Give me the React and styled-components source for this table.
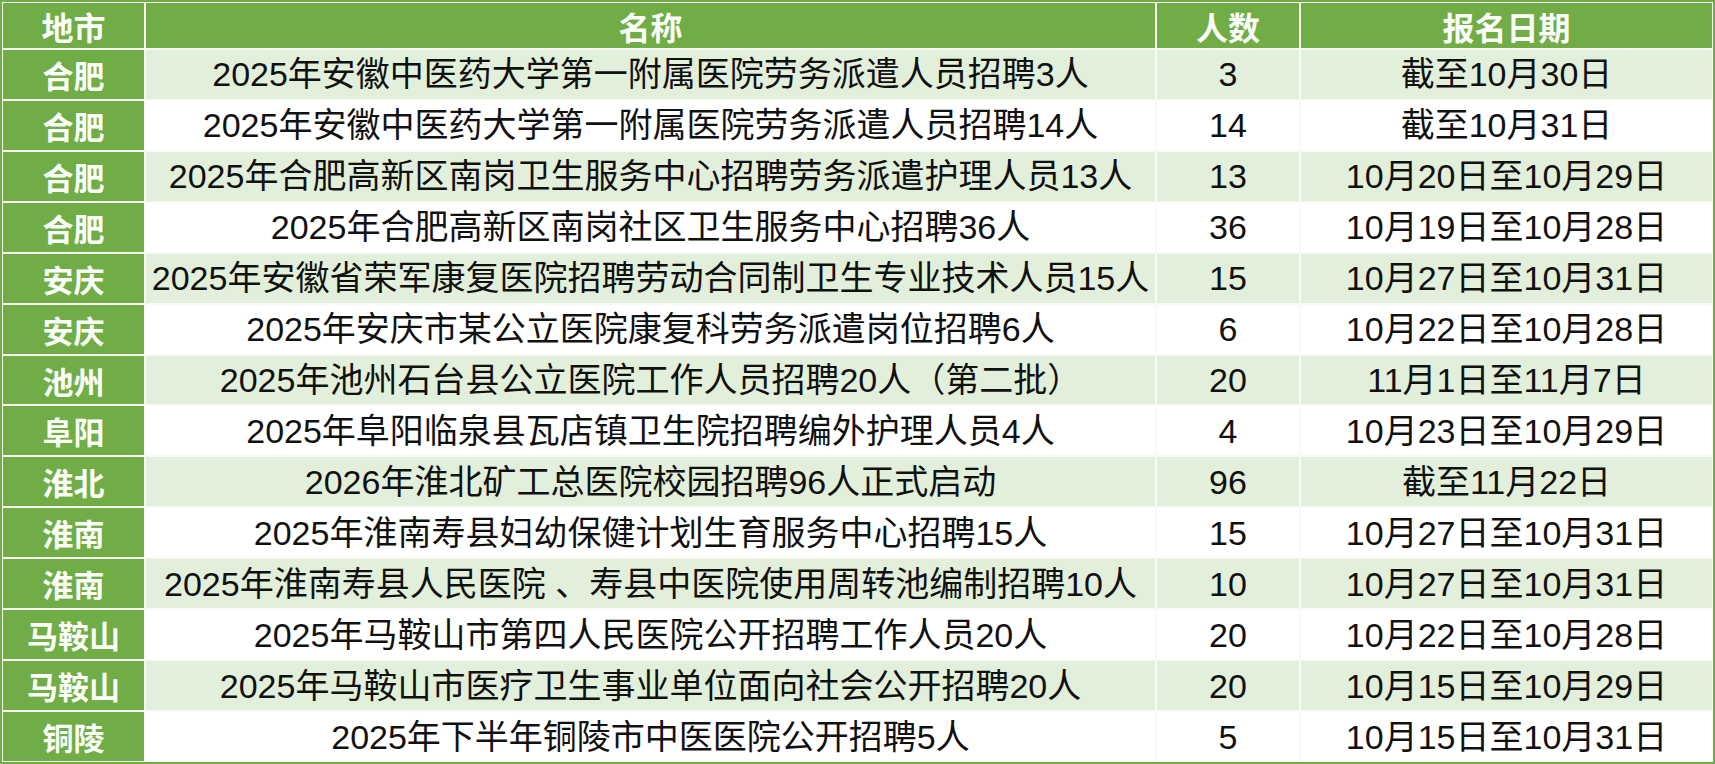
import React from "react";
import styled, { createGlobalStyle } from "styled-components";

const GlobalStyle = createGlobalStyle`
  html, body {
    margin: 0;
    padding: 0;
    background: #ffffff;
    overflow: hidden;
  }
  body {
    font-family: "Liberation Sans", "Noto Sans CJK SC", sans-serif;
  }
`;

const Table = styled.div`
  box-sizing: border-box;
  width: 1715px;
  height: 764px;
  display: grid;
  grid-template-columns: 141px 1009px 142px 1fr;
  grid-template-rows: 45px repeat(14, 1fr);
  gap: 2px;
  padding: 1px;
  background: #f7fbf3;
  border: 2px solid #70ad47;
`;

const HeadCell = styled.div`
  display: flex;
  align-items: center;
  justify-content: center;
  background: #70ad47;
  color: #fbfdf8;
  font-family: "Noto Sans CJK SC", sans-serif;
  font-size: 32px;
  font-weight: 700;
  line-height: 1;
`;

const CityCell = styled(HeadCell)`
  font-size: 31px;
`;

const Cell = styled.div`
  display: flex;
  align-items: center;
  justify-content: center;
  background: ${(p) => (p.$alt ? "#e2efda" : "#ffffff")};
  color: #111111;
  font-size: 34px;
  font-weight: 400;
  line-height: 1;
  white-space: nowrap;
`;

const rows = [
  ["合肥", "2025年安徽中医药大学第一附属医院劳务派遣人员招聘3人", "3", "截至10月30日"],
  ["合肥", "2025年安徽中医药大学第一附属医院劳务派遣人员招聘14人", "14", "截至10月31日"],
  ["合肥", "2025年合肥高新区南岗卫生服务中心招聘劳务派遣护理人员13人", "13", "10月20日至10月29日"],
  ["合肥", "2025年合肥高新区南岗社区卫生服务中心招聘36人", "36", "10月19日至10月28日"],
  ["安庆", "2025年安徽省荣军康复医院招聘劳动合同制卫生专业技术人员15人", "15", "10月27日至10月31日"],
  ["安庆", "2025年安庆市某公立医院康复科劳务派遣岗位招聘6人", "6", "10月22日至10月28日"],
  ["池州", "2025年池州石台县公立医院工作人员招聘20人（第二批）", "20", "11月1日至11月7日"],
  ["阜阳", "2025年阜阳临泉县瓦店镇卫生院招聘编外护理人员4人", "4", "10月23日至10月29日"],
  ["淮北", "2026年淮北矿工总医院校园招聘96人正式启动", "96", "截至11月22日"],
  ["淮南", "2025年淮南寿县妇幼保健计划生育服务中心招聘15人", "15", "10月27日至10月31日"],
  ["淮南", "2025年淮南寿县人民医院 、寿县中医院使用周转池编制招聘10人", "10", "10月27日至10月31日"],
  ["马鞍山", "2025年马鞍山市第四人民医院公开招聘工作人员20人", "20", "10月22日至10月28日"],
  ["马鞍山", "2025年马鞍山市医疗卫生事业单位面向社会公开招聘20人", "20", "10月15日至10月29日"],
  ["铜陵", "2025年下半年铜陵市中医医院公开招聘5人", "5", "10月15日至10月31日"],
];

export default function App() {
  return (
    <>
      <GlobalStyle />
      <Table>
        <HeadCell>地市</HeadCell>
        <HeadCell>名称</HeadCell>
        <HeadCell>人数</HeadCell>
        <HeadCell>报名日期</HeadCell>
        {rows.map(([city, name, count, date], i) => {
          const alt = i % 2 === 0;
          return (
            <React.Fragment key={i}>
              <CityCell>{city}</CityCell>
              <Cell $alt={alt}>{name}</Cell>
              <Cell $alt={alt}>{count}</Cell>
              <Cell $alt={alt}>{date}</Cell>
            </React.Fragment>
          );
        })}
      </Table>
    </>
  );
}
